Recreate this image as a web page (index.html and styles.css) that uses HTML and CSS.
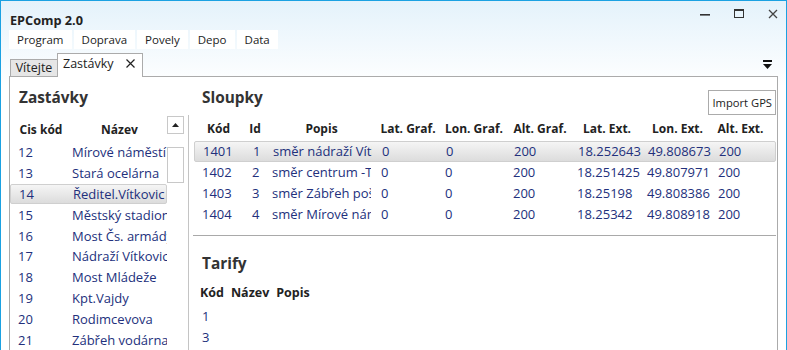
FILE: index.html
```html
<!doctype html>
<html lang="cs">
<head>
  <meta charset="UTF-8" />
  <title>EPComp 2.0</title>
  <link rel="stylesheet" href="styles.css">
</head>
<body>
  <div class="window">
    <div class="titlebar">
      <span class="title">EPComp 2.0</span>
      <div class="winctl">
        <svg width="10" height="10" viewBox="0 0 10 10"><rect x="0" y="5" width="10" height="1.6" fill="#333"/></svg>
        <svg width="10" height="10" viewBox="0 0 10 10"><rect x="0.5" y="0.5" width="9" height="8" fill="none" stroke="#333"/><rect x="0" y="0" width="10" height="2" fill="#333"/></svg>
        <svg width="10" height="10" viewBox="0 0 10 10"><path d="M1 1 L9 9 M9 1 L1 9" stroke="#444" stroke-width="1.3"/></svg>
      </div>
    </div>

    <nav class="menu">
      <span>Program</span>
      <span>Doprava</span>
      <span>Povely</span>
      <span>Depo</span>
      <span>Data</span>
    </nav>

    <div class="tabstrip">
      <div class="tab">Vítejte</div>
      <div class="tab active">Zastávky <svg class="x" width="9" height="9" viewBox="0 0 9 9"><path d="M0.5 0.5 L8.5 8.5 M8.5 0.5 L0.5 8.5" stroke="#222" stroke-width="1.2"/></svg></div>
      <svg class="tabmenu" width="9" height="10" viewBox="0 0 9 10"><rect x="0" y="0" width="9" height="2" fill="#111"/><path d="M0 4 H9 L4.5 9 Z" fill="#111"/></svg>
    </div>

    <div class="tabpage">
      <section class="stops">
        <h2>Zastávky</h2>
        <div class="listbox">
          <div class="list">
            <div class="lhead"><span>Cis kód</span><span>Název</span></div>
            <div class="lrow"><span>12</span><span>Mírové náměstí</span></div>
            <div class="lrow"><span>13</span><span>Stará ocelárna</span></div>
            <div class="lrow sel"><span>14</span><span>Ředitel.Vítkovic</span></div>
            <div class="lrow"><span>15</span><span>Městský stadion</span></div>
            <div class="lrow"><span>16</span><span>Most Čs. armády</span></div>
            <div class="lrow"><span>17</span><span>Nádraží Vítkovice</span></div>
            <div class="lrow"><span>18</span><span>Most Mládeže</span></div>
            <div class="lrow"><span>19</span><span>Kpt.Vajdy</span></div>
            <div class="lrow"><span>20</span><span>Rodimcevova</span></div>
            <div class="lrow"><span>21</span><span>Zábřeh vodárna</span></div>
          </div>
          <div class="vscroll">
            <div class="sbtn"><svg width="7" height="4" viewBox="0 0 7 4"><path d="M0 4 L3.5 0 L7 4 Z" fill="#222"/></svg></div>
            <div class="thumb"></div>
          </div>
        </div>
      </section>

      <div class="vsep"></div>

      <section class="detail">
        <div class="dtop">
          <h2>Sloupky</h2>
          <button class="btn">Import GPS</button>
        </div>
        <div class="grid ghead">
          <span>Kód</span><span>Id</span><span>Popis</span><span>Lat. Graf.</span><span>Lon. Graf.</span><span>Alt. Graf.</span><span>Lat. Ext.</span><span>Lon. Ext.</span><span>Alt. Ext.</span>
        </div>
        <div class="grid grow sel">
          <span>1401</span><span>1</span><span>směr nádraží Vítkovice</span><span>0</span><span>0</span><span>200</span><span>18.252643</span><span>49.808673</span><span>200</span>
        </div>
        <div class="grid grow">
          <span>1402</span><span>2</span><span>směr centrum -Trojice</span><span>0</span><span>0</span><span>200</span><span>18.251425</span><span>49.807971</span><span>200</span>
        </div>
        <div class="grid grow">
          <span>1403</span><span>3</span><span>směr Zábřeh pošta</span><span>0</span><span>0</span><span>200</span><span>18.25198</span><span>49.808386</span><span>200</span>
        </div>
        <div class="grid grow">
          <span>1404</span><span>4</span><span>směr Mírové náměstí</span><span>0</span><span>0</span><span>200</span><span>18.25342</span><span>49.808918</span><span>200</span>
        </div>

        <div class="hsep"></div>

        <h2 class="tarify">Tarify</h2>
        <div class="thead"><span>Kód</span><span>Název</span><span>Popis</span></div>
        <div class="trow">1</div>
        <div class="trow">3</div>
      </section>
    </div>
  </div>
</body>
</html>
```

FILE: styles.css
```css
* { box-sizing: border-box; }
html, body { margin: 0; }
body {
  font-family: "Open Sans", "Noto Sans", sans-serif;
  font-size: 12px;
  color: #222;
}

.window {
  height: 350px;
  border: 1px solid #1ba1e2;
  border-bottom: none;
  background: linear-gradient(#e4f2fb, #ffffff 85px);
  display: flex;
  flex-direction: column;
  overflow: hidden;
}

/* title bar */
.titlebar { height: 30px; display: flex; justify-content: space-between; }
.title { font-weight: 700; font-size: 12.7px; padding: 10px 0 0 9px; line-height: 18px; color: #222; }
.winctl { display: flex; gap: 24px; padding: 8px 8px 0 0; }

/* menu */
.menu { display: flex; gap: 2px; margin-left: 8px; height: 19px; }
.menu span { background: #fff; padding: 0 8px; line-height: 19px; font-size: 11.5px; }

/* tabs */
.tabstrip { height: 28px; display: flex; align-items: flex-end; padding-left: 9px; position: relative; z-index: 1; }
.tab {
  width: 48px;
  height: 17px;
  line-height: 15px;
  text-align: center;
  background: #e6e6e6;
  border: 1px solid #ababab;
  border-bottom: none;
  font-size: 12.5px;
}
.tab.active {
  width: 86px;
  height: 24px;
  line-height: 20px;
  text-align: left;
  margin-left: -1px;
  margin-bottom: -1px;
  background: #fff;
  padding-left: 5px;
}
.tab .x { margin-left: 9px; }
.tabmenu { margin: 0 14px 6px auto; }

/* tab page */
.tabpage {
  flex: 1;
  margin: 0 8px 0 8px;
  border: 1px solid #ababab;
  border-bottom: none;
  background: #fff;
  display: flex;
}
h2 { margin: 0; font-size: 15.4px; font-weight: 700; color: #333; line-height: 20px; }

.stops { width: 178px; }
.stops h2 { height: 39px; padding: 11px 0 0 9px; }
.listbox { display: flex; }
.list { width: 157px; }
.lhead, .lrow { display: grid; grid-template-columns: 62px 95px; }
.lhead { height: 26px; align-items: center; font-weight: 700; text-align: center; }
.lrow { height: 20.8px; align-items: center; color: #22307c; white-space: nowrap; overflow: hidden; font-size: 13px; }
.lrow span:first-child { padding-left: 8px; }
.lrow span { overflow: hidden; }

.sel {
  background: linear-gradient(#f5f5f5, #dcdcdc);
  border: 1px solid #cfcfcf;
  border-radius: 2px;
}

.vscroll { width: 17px; display: flex; flex-direction: column; gap: 13px; }
.sbtn { height: 18px; border: 1px solid #c8c8c8; display: flex; align-items: center; justify-content: center; }
.thumb { height: 36px; border: 1px solid #c8c8c8; }

.vsep { width: 1px; background: #c4c4c4; margin-top: 38px; }

.detail { flex: 1; padding: 0 1px 0 5px; }
.dtop { height: 39px; display: flex; justify-content: space-between; padding-top: 13px; }
.dtop h2 { padding: 0 0 0 8px; margin-top: -2px; }
.btn {
  font: inherit;
  font-size: 11.2px;
  height: 25px;
  padding: 0 3px;
  background: #fff;
  border: 1px solid #ababab;
  color: #222;
}

.grid { display: grid; grid-template-columns: 49px 24px 109px 64px 68px 64px 70px 71px 55px; }
.ghead { height: 25px; align-items: center; font-weight: 700; text-align: center; }
.grow { height: 20.8px; align-items: center; color: #22307c; white-space: nowrap; font-size: 13px; }
.grow span { padding-left: 5px; overflow: hidden; }
.grow span:first-child { padding-left: 8px; }
.grow span:nth-child(2) { padding-left: 9px; }
.grow span:nth-child(3) { margin-right: 5px; }

.hsep { height: 1px; background: #a9a9a9; margin: 11px 0 0 -1px; }

.tarify { margin: 18px 0 0 8px; }
.thead { display: flex; gap: 7px; font-weight: 700; font-size: 12.5px; padding: 10px 0 0 6px; line-height: 18px; }
.trow { color: #22307c; padding-left: 8px; line-height: 21px; font-size: 13px; }
.thead + .trow { margin-top: 4px; }
```
